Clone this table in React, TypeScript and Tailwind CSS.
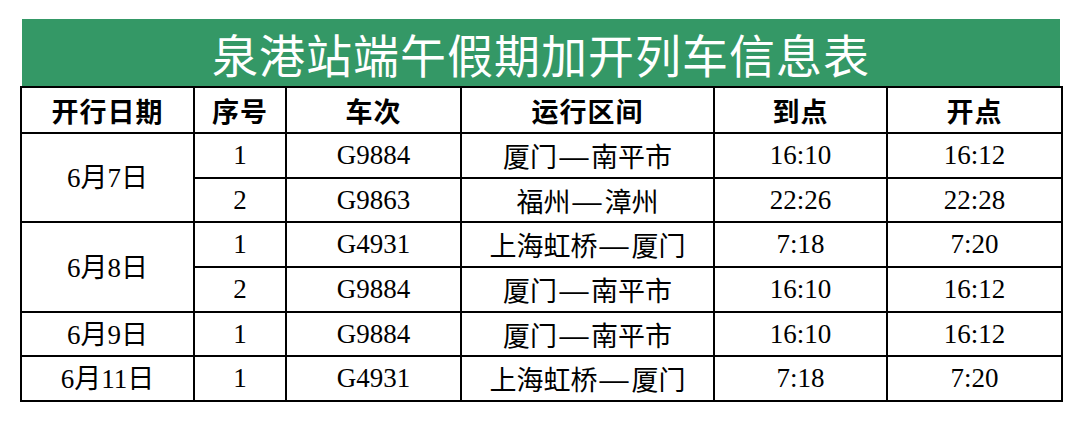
const rows = [
  { date: "6月7日", span: 2, no: "1", train: "G9884", route: "厦门—南平市", arr: "16:10", dep: "16:12" },
  { date: "", span: 0, no: "2", train: "G9863", route: "福州—漳州", arr: "22:26", dep: "22:28" },
  { date: "6月8日", span: 2, no: "1", train: "G4931", route: "上海虹桥—厦门", arr: "7:18", dep: "7:20" },
  { date: "", span: 0, no: "2", train: "G9884", route: "厦门—南平市", arr: "16:10", dep: "16:12" },
  { date: "6月9日", span: 1, no: "1", train: "G9884", route: "厦门—南平市", arr: "16:10", dep: "16:12" },
  { date: "6月11日", span: 1, no: "1", train: "G4931", route: "上海虹桥—厦门", arr: "7:18", dep: "7:20" },
];

const headers = ["开行日期", "序号", "车次", "运行区间", "到点", "开点"];

function Route({ text }: { text: string }) {
  const [from, to] = text.split("—");
  return (
    <>
      {from}
      <span className="inline-block mx-[5px] scale-x-[1.35]">—</span>
      {to}
    </>
  );
}

export default function App() {
  return (
    <div
      className="w-[1080px] h-[422px] bg-white pt-[19px] pl-[20px]"
      style={{ fontFamily: "'Liberation Serif', 'Noto Sans CJK SC', serif" }}
    >
      <div className="ml-[2px] w-[1038px] h-[67px] bg-[#349866] flex items-center justify-center">
        <h1
          className="text-white text-[46px] leading-none tracking-[1px] font-normal"
          style={{ fontFamily: "'Noto Sans CJK SC', serif" }}
        >
          泉港站端午假期加开列车信息表
        </h1>
      </div>

      <table className="w-[1041px] table-fixed border-collapse border-[2.5px] border-black text-black">
        <colgroup>
          <col className="w-[173px]" />
          <col className="w-[92px]" />
          <col className="w-[175px]" />
          <col className="w-[253px]" />
          <col className="w-[173px]" />
          <col className="w-[175px]" />
        </colgroup>
        <thead>
          <tr className="h-[46px]">
            {headers.map((h) => (
              <th
                key={h}
                className="border-2 border-black text-[27px] font-bold leading-none text-center tracking-[1px]"
                style={{ fontFamily: "'Noto Sans CJK SC', serif" }}
              >
                {h}
              </th>
            ))}
          </tr>
        </thead>
        <tbody className="text-[27px] leading-none">
          {rows.map((r, i) => (
            <tr key={i} className="h-[44.7px]">
              {r.span > 0 && (
                <td rowSpan={r.span} className="border-2 border-black text-center pt-[2px]">
                  {r.date}
                </td>
              )}
              <td className="border-2 border-black text-center">{r.no}</td>
              <td className="border-2 border-black text-center">{r.train}</td>
              <td
                className="border-2 border-black text-center"
                style={{ fontFamily: "'Noto Sans CJK SC', serif" }}
              >
                <Route text={r.route} />
              </td>
              <td className="border-2 border-black text-center">{r.arr}</td>
              <td className="border-2 border-black text-center">{r.dep}</td>
            </tr>
          ))}
        </tbody>
      </table>
    </div>
  );
}
